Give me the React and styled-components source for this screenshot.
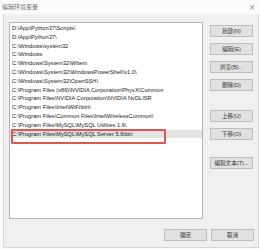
import React from 'react';
import styled, { createGlobalStyle } from 'styled-components';

const paths = [
  'D:\\App\\Python37\\Scripts\\',
  'D:\\App\\Python37\\',
  'C:\\Windows\\system32',
  'C:\\Windows',
  'C:\\Windows\\System32\\Wbem',
  'C:\\Windows\\System32\\WindowsPowerShell\\v1.0\\',
  'C:\\Windows\\System32\\OpenSSH\\',
  'C:\\Program Files (x86)\\NVIDIA Corporation\\PhysX\\Common',
  'C:\\Program Files\\NVIDIA Corporation\\NVIDIA NvDLISR',
  'C:\\Program Files\\Intel\\WiFi\\bin\\',
  'C:\\Program Files\\Common Files\\Intel\\WirelessCommon\\',
  'C:\\Program Files\\MySQL\\MySQL Utilities 1.6\\',
  'C:\\Program Files\\MySQL\\MySQL Server 5.6\\bin',
];

const App = () => {
  return (
    <Window>
      <GlobalStyle />
      <TitleBar>
        <Title>编辑环境变量</Title>
        <Close>×</Close>
      </TitleBar>
      <Body>
        <Main>
          <List>
            {paths.map((p, i) => (
              <Row key={p} $selected={i === paths.length - 1}>{p}</Row>
            ))}
            <Mark />
          </List>
          <Side>
            <Button>新建(N)</Button>
            <Button>编辑(E)</Button>
            <Button>浏览(B)...</Button>
            <Button>删除(D)</Button>
            <Button $space={19}>上移(U)</Button>
            <Button>下移(O)</Button>
            <Button $space={17}>编辑文本(T)...</Button>
          </Side>
        </Main>
        <Footer>
          <Button>确定</Button>
          <Button>取消</Button>
        </Footer>
      </Body>
    </Window>
  );
};

const GlobalStyle = createGlobalStyle`
  body {
    margin: 0;
    background: #fbfbfb;
    font-family: "Liberation Sans", "Noto Sans CJK SC", sans-serif;
  }
`;

const Window = styled.div`
  width: 260px;
  height: 250px;
  display: flex;
  flex-direction: column;
  background: #fbfbfb;
`;

const TitleBar = styled.div`
  height: 14px;
  display: flex;
  align-items: center;
  justify-content: space-between;
  padding: 0 5px 0 2px;
`;

const Title = styled.span`
  font-family: "Noto Sans CJK SC", sans-serif;
  font-size: 6px;
  color: #6a6a6a;
  margin-top: -1px;
`;

const Close = styled.span`
  font-size: 10px;
  color: #9a9a9a;
  font-weight: 300;
`;

const Body = styled.div`
  margin: 0 1px 0 3px;
  height: 234px;
  box-sizing: border-box;
  background: #f0f0f0;
  border-left: 1px solid #d6d6d6;
  border-right: 1px solid #d6d6d6;
  border-bottom: 1px solid #d6d6d6;
  display: flex;
  flex-direction: column;
`;

const Main = styled.div`
  display: flex;
  gap: 7px;
  padding: 8px 0 0 5px;
`;

const List = styled.div`
  position: relative;
  width: 194px;
  height: 197px;
  box-sizing: border-box;
  background: #fff;
  border: 1px solid #b4b4b4;
  padding-top: 1px;
`;

const Row = styled.div`
  height: 8.8px;
  line-height: 8.8px;
  padding-left: 2px;
  font-size: 5.7px;
  color: #222;
  white-space: nowrap;
  background: ${(p) => (p.$selected ? '#e3e3e3' : 'transparent')};
`;

const Mark = styled.div`
  position: absolute;
  left: 1px;
  top: 106px;
  width: 155px;
  height: 15px;
  box-sizing: border-box;
  border: 2px solid #e2574f;
  border-radius: 1px;
`;

const Side = styled.div`
  display: flex;
  flex-direction: column;
  gap: 6px;
  padding-top: 3px;
`;

const Button = styled.div`
  width: 43px;
  height: 12px;
  box-sizing: border-box;
  margin-top: ${(p) => (p.$space ? p.$space - 6 : 0)}px;
  background: #e1e1e1;
  border: 1px solid #bdbdbd;
  display: flex;
  align-items: center;
  justify-content: center;
  font-family: "Liberation Sans", "Noto Sans CJK SC", sans-serif;
  font-size: 5.6px;
  color: #333;
  white-space: nowrap;
`;

const Footer = styled.div`
  display: flex;
  justify-content: flex-end;
  gap: 4px;
  padding: 10px 4px 0 0;
`;

export default App;
